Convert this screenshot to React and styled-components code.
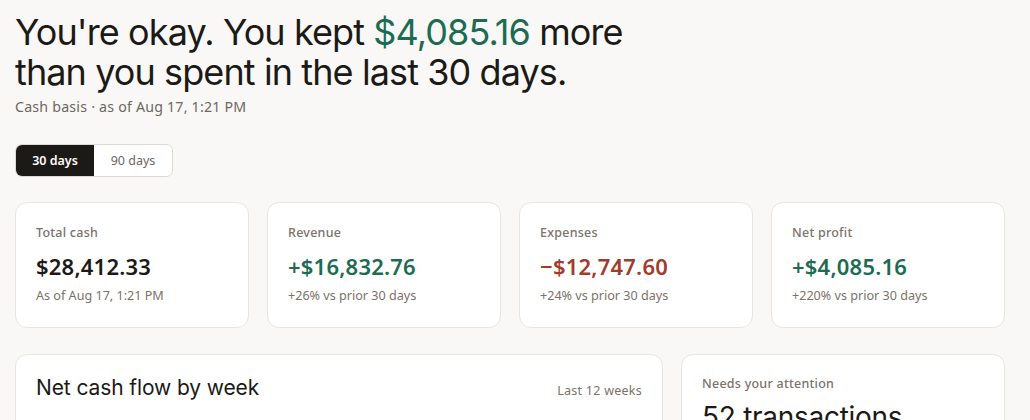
import React from 'react'
import styled, { createGlobalStyle } from 'styled-components'

const GlobalStyle = createGlobalStyle`
  html, body {
    margin: 0;
    padding: 0;
    background: #f9f8f6;
    color: #1c1a17;
    font-family: 'Noto Sans', 'Open Sans', sans-serif;
  }
  * { box-sizing: border-box; }
`

const Page = styled.main`
  width: 1030px;
  padding: 12px 25px 0 15px;
`

const Headline = styled.h1`
  margin: 0;
  max-width: 650px;
  font-family: Inter, 'Noto Sans', sans-serif;
  font-size: 36px;
  font-weight: 400;
  line-height: 40px;
  letter-spacing: -0.025em;
  color: #1c1a17;
`

const Money = styled.span`
  color: ${({ tone }) => (tone === 'negative' ? '#a23b2c' : '#1c6b52')};
`

const Basis = styled.p`
  margin: 5px 0 0;
  font-size: 14.2px;
  letter-spacing: 0.015em;
  color: #6e675f;
`

const Toggle = styled.div`
  display: inline-flex;
  margin-top: 28px;
  border: 1px solid #ddd8d1;
  border-radius: 7px;
  overflow: hidden;
  background: #fff;
`

const ToggleButton = styled.button`
  width: 78px;
  height: 31px;
  border: 0;
  padding: 0;
  font-family: inherit;
  font-size: 12.5px;
  font-weight: ${({ active }) => (active ? 600 : 400)};
  background: ${({ active }) => (active ? '#1c1a17' : '#fff')};
  color: ${({ active }) => (active ? '#fff' : '#6e675f')};
  cursor: pointer;
`

const Metrics = styled.section`
  display: grid;
  grid-template-columns: repeat(4, 1fr);
  gap: 18px;
  margin-top: 25px;
`

const Card = styled.div`
  background: #fff;
  border: 1px solid #e9e5e0;
  border-radius: 12px;
  padding: ${({ pad }) => pad || '20px'};
`

const Label = styled.div`
  font-size: 12.5px;
  font-weight: 500;
  letter-spacing: 0.02em;
  color: #7b7268;
`

const Value = styled.div`
  margin-top: 11px;
  font-size: 22px;
  font-weight: 600;
  letter-spacing: 0.01em;
  line-height: 28px;
  color: ${({ tone }) =>
    tone === 'positive' ? '#1c6b52' : tone === 'negative' ? '#a23b2c' : '#1c1a17'};
`

const Sub = styled.div`
  margin-top: 7px;
  font-size: 12.6px;
  color: #7b7268;
`

const Lower = styled.section`
  display: grid;
  grid-template-columns: 2fr 1fr;
  gap: 18px;
  margin-top: 26px;
`

const PanelHead = styled.div`
  display: flex;
  justify-content: space-between;
  align-items: baseline;
`

const PanelTitle = styled.h2`
  margin: 0;
  font-family: Inter, 'Noto Sans', sans-serif;
  font-size: 21px;
  font-weight: 400;
  letter-spacing: -0.005em;
`

const Muted = styled.span`
  font-size: 12.5px;
  letter-spacing: 0.02em;
  color: #7b7268;
`

const BigCount = styled.div`
  margin-top: 8px;
  font-family: Inter, 'Noto Sans', sans-serif;
  font-size: 28px;
  letter-spacing: -0.01em;
`

const metrics = [
  { label: 'Total cash', value: '$28,412.33', sub: 'As of Aug 17, 1:21 PM' },
  { label: 'Revenue', value: '+$16,832.76', sub: '+26% vs prior 30 days', tone: 'positive' },
  { label: 'Expenses', value: '\u2212$12,747.60', sub: '+24% vs prior 30 days', tone: 'negative' },
  { label: 'Net profit', value: '+$4,085.16', sub: '+220% vs prior 30 days', tone: 'positive' }
]

export default function App () {
  return (
    <Page>
      <GlobalStyle />
      <Headline>
        You're okay. You kept <Money>$4,085.16</Money> more than you spent in the last 30 days.
      </Headline>
      <Basis>Cash basis · as of Aug 17, 1:21 PM</Basis>

      <Toggle>
        <ToggleButton active>30 days</ToggleButton>
        <ToggleButton>90 days</ToggleButton>
      </Toggle>

      <Metrics>
        {metrics.map(m => (
          <Card key={m.label} pad='21px 20px 23px'>
            <Label>{m.label}</Label>
            <Value tone={m.tone}>{m.value}</Value>
            <Sub>{m.sub}</Sub>
          </Card>
        ))}
      </Metrics>

      <Lower>
        <Card pad='20px'>
          <PanelHead>
            <PanelTitle>Net cash flow by week</PanelTitle>
            <Muted>Last 12 weeks</Muted>
          </PanelHead>
        </Card>
        <Card pad='20px'>
          <Label>Needs your attention</Label>
          <BigCount>52 transactions</BigCount>
        </Card>
      </Lower>
    </Page>
  )
}
